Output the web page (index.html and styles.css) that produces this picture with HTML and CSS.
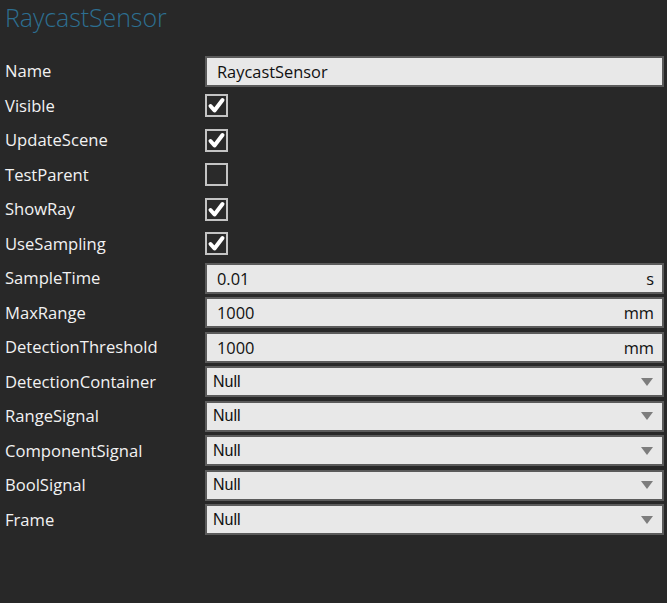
FILE: index.html
```html
<!DOCTYPE html>
<html>
<head>
<meta charset="utf-8">
<link rel="stylesheet" href="styles.css">
</head>
<body>
<div class="panel">
  <h1 class="title">RaycastSensor</h1>
  <div class="grid">
    <div class="label">Name</div>
    <div class="field"><div class="box text"><span class="val">RaycastSensor</span></div></div>

    <div class="label">Visible</div>
    <div class="field"><div class="check on"><svg viewBox="0 0 19 19"><path d="M3.5 10 L7.5 14.5 L15.5 4"/></svg></div></div>

    <div class="label">UpdateScene</div>
    <div class="field"><div class="check on"><svg viewBox="0 0 19 19"><path d="M3.5 10 L7.5 14.5 L15.5 4"/></svg></div></div>

    <div class="label">TestParent</div>
    <div class="field"><div class="check"></div></div>

    <div class="label">ShowRay</div>
    <div class="field"><div class="check on"><svg viewBox="0 0 19 19"><path d="M3.5 10 L7.5 14.5 L15.5 4"/></svg></div></div>

    <div class="label">UseSampling</div>
    <div class="field"><div class="check on"><svg viewBox="0 0 19 19"><path d="M3.5 10 L7.5 14.5 L15.5 4"/></svg></div></div>

    <div class="label">SampleTime</div>
    <div class="field"><div class="box text"><span class="val">0.01</span><span class="unit">s</span></div></div>

    <div class="label">MaxRange</div>
    <div class="field"><div class="box text"><span class="val">1000</span><span class="unit">mm</span></div></div>

    <div class="label">DetectionThreshold</div>
    <div class="field"><div class="box text"><span class="val">1000</span><span class="unit">mm</span></div></div>

    <div class="label">DetectionContainer</div>
    <div class="field"><div class="box combo"><span class="null">Null</span><span class="arrow"></span></div></div>

    <div class="label">RangeSignal</div>
    <div class="field"><div class="box combo"><span class="null">Null</span><span class="arrow"></span></div></div>

    <div class="label">ComponentSignal</div>
    <div class="field"><div class="box combo"><span class="null">Null</span><span class="arrow"></span></div></div>

    <div class="label">BoolSignal</div>
    <div class="field"><div class="box combo"><span class="null">Null</span><span class="arrow"></span></div></div>

    <div class="label">Frame</div>
    <div class="field"><div class="box combo"><span class="null">Null</span><span class="arrow"></span></div></div>
  </div>
</div>
</body>
</html>
```

FILE: styles.css
```css
html, body {
  margin: 0;
  padding: 0;
  background: #282828;
}
body {
  width: 667px;
  height: 603px;
  overflow: hidden;
  font-family: "Open Sans", "Noto Sans", sans-serif;
}
.panel {
  padding: 0 3px 0 5px;
}
.title {
  margin: 0;
  height: 54px;
  font-family: "Open Sans", "Noto Sans", sans-serif;
  font-weight: 300;
  font-size: 25px;
  line-height: 34px;
  color: #2d6f91;
  letter-spacing: -0.1px;
}
.grid {
  display: grid;
  grid-template-columns: 200px 459px;
  grid-auto-rows: 34.5px;
  align-items: center;
}
.label {
  color: #f2f2f2;
  font-size: 16.6px;
  letter-spacing: 0;
  line-height: 20px;
}
.field {
  display: flex;
  align-items: center;
  height: 100%;
}
.box {
  box-sizing: border-box;
  width: 459px;
  height: 31px;
  background: #e8e8e8;
  border: 2px solid #5b5b5b;
  display: flex;
  align-items: center;
  color: #111;
}
.text {
  padding: 0 8px 0 10px;
  font-size: 16.4px;
}
.val {
  flex: 1;
  font-family: "Open Sans", sans-serif;
}
.unit {
  font-family: "Open Sans", sans-serif;
}
.combo {
  padding: 0 8px 0 6px;
  font-family: "Liberation Sans", Arial, sans-serif;
  font-size: 16px;
}
.null {
  flex: 1;
}
.arrow {
  width: 0;
  height: 0;
  border-left: 6px solid transparent;
  border-right: 6px solid transparent;
  border-top: 8px solid #7d7d7d;
  margin-right: 1px;
}
.check {
  box-sizing: border-box;
  width: 23px;
  height: 23px;
  border: 2px solid #c4c4c4;
  background: #2a2a2a;
}
.check svg {
  display: block;
  width: 19px;
  height: 19px;
}
.check path {
  fill: none;
  stroke: #ffffff;
  stroke-width: 4;
  stroke-linecap: round;
  stroke-linejoin: round;
}
```
